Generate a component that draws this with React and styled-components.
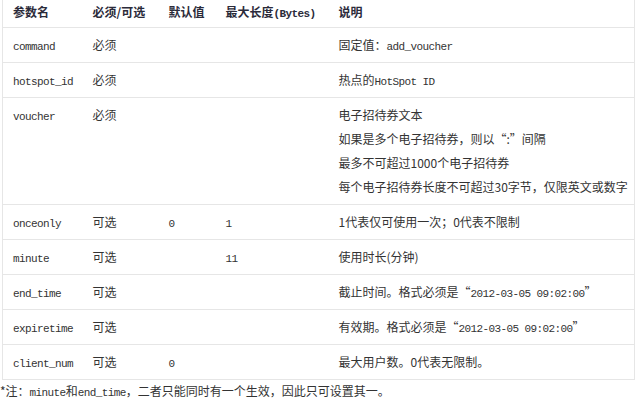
import React from "react";
import styled, { createGlobalStyle } from "styled-components";

const GlobalStyle = createGlobalStyle`
  body {
    margin: 0;
    background: #fff;
    font-family: "Noto Sans CJK SC", "Liberation Sans", sans-serif;
    font-size: 12px;
    color: #333;
  }
`;

const Table = styled.table`
  margin-left: 2px;
  width: 633px;
  table-layout: fixed;
  border-collapse: collapse;
  border-left: 1px solid #e6e6e6;
  border-right: 1px solid #e6e6e6;
`;

const Th = styled.th`
  text-align: left;
  font-weight: bold;
  color: #2b2b3a;
  height: 24px;
  padding: 0 0 3px 10px;
  line-height: 24px;
  border-bottom: 1px solid #e6e6e6;
  white-space: nowrap;
`;

const Td = styled.td`
  padding: 5px 0 5px 10px;
  line-height: 24px;
  vertical-align: top;
  border-bottom: 1px solid #e6e6e6;
  white-space: nowrap;
`;

const Line = styled.div`
  height: 24px;
  line-height: 24px;
  overflow: visible;
`;

const Code = styled.span`
  font-family: "Liberation Mono", monospace;
  font-size: 11px;
  letter-spacing: -0.6px;
  line-height: 1;
`;

const Note = styled.p`
  margin: 0;
  height: 22px;
  line-height: 22px;
  color: #333;
`;

const rows = [
  { name: "command", req: "必须", def: "", len: "", desc: [<>固定值：<Code>add_voucher</Code></>] },
  { name: "hotspot_id", req: "必须", def: "", len: "", desc: [<>热点的<Code>HotSpot ID</Code></>] },
  {
    name: "voucher", req: "必须", def: "", len: "",
    desc: [
      "电子招待券文本",
      "如果是多个电子招待券，则以“:”间隔",
      "最多不可超过1000个电子招待券",
      "每个电子招待券长度不可超过30字节，仅限英文或数字",
    ],
  },
  { name: "onceonly", req: "可选", def: "0", len: "1", desc: ["1代表仅可使用一次；0代表不限制"] },
  { name: "minute", req: "可选", def: "", len: "11", desc: ["使用时长(分钟)"] },
  { name: "end_time", req: "可选", def: "", len: "", desc: [<>截止时间。格式必须是“<Code>2012-03-05 09:02:00</Code>”</>] },
  { name: "expiretime", req: "可选", def: "", len: "", desc: [<>有效期。格式必须是“<Code>2012-03-05 09:02:00</Code>”</>] },
  { name: "client_num", req: "可选", def: "0", len: "", desc: ["最大用户数。0代表无限制。"] },
];

export default function App() {
  return (
    <>
      <GlobalStyle />
      <Table>
        <colgroup>
          <col style={{ width: 80 }} />
          <col style={{ width: 76 }} />
          <col style={{ width: 57 }} />
          <col style={{ width: 113 }} />
          <col />
        </colgroup>
        <thead>
          <tr>
            <Th>参数名</Th>
            <Th>必须/可选</Th>
            <Th>默认值</Th>
            <Th>最大长度<Code>(Bytes)</Code></Th>
            <Th>说明</Th>
          </tr>
        </thead>
        <tbody>
          {rows.map((r) => (
            <tr key={r.name}>
              <Td><Line><Code>{r.name}</Code></Line></Td>
              <Td><Line>{r.req}</Line></Td>
              <Td><Line><Code>{r.def}</Code></Line></Td>
              <Td><Line><Code>{r.len}</Code></Line></Td>
              <Td>
                {r.desc.map((d, i) => (
                  <Line key={i}>{d}</Line>
                ))}
              </Td>
            </tr>
          ))}
        </tbody>
      </Table>
      <Note>*注：<Code>minute</Code>和<Code>end_time</Code>，二者只能同时有一个生效，因此只可设置其一。</Note>
    </>
  );
}
